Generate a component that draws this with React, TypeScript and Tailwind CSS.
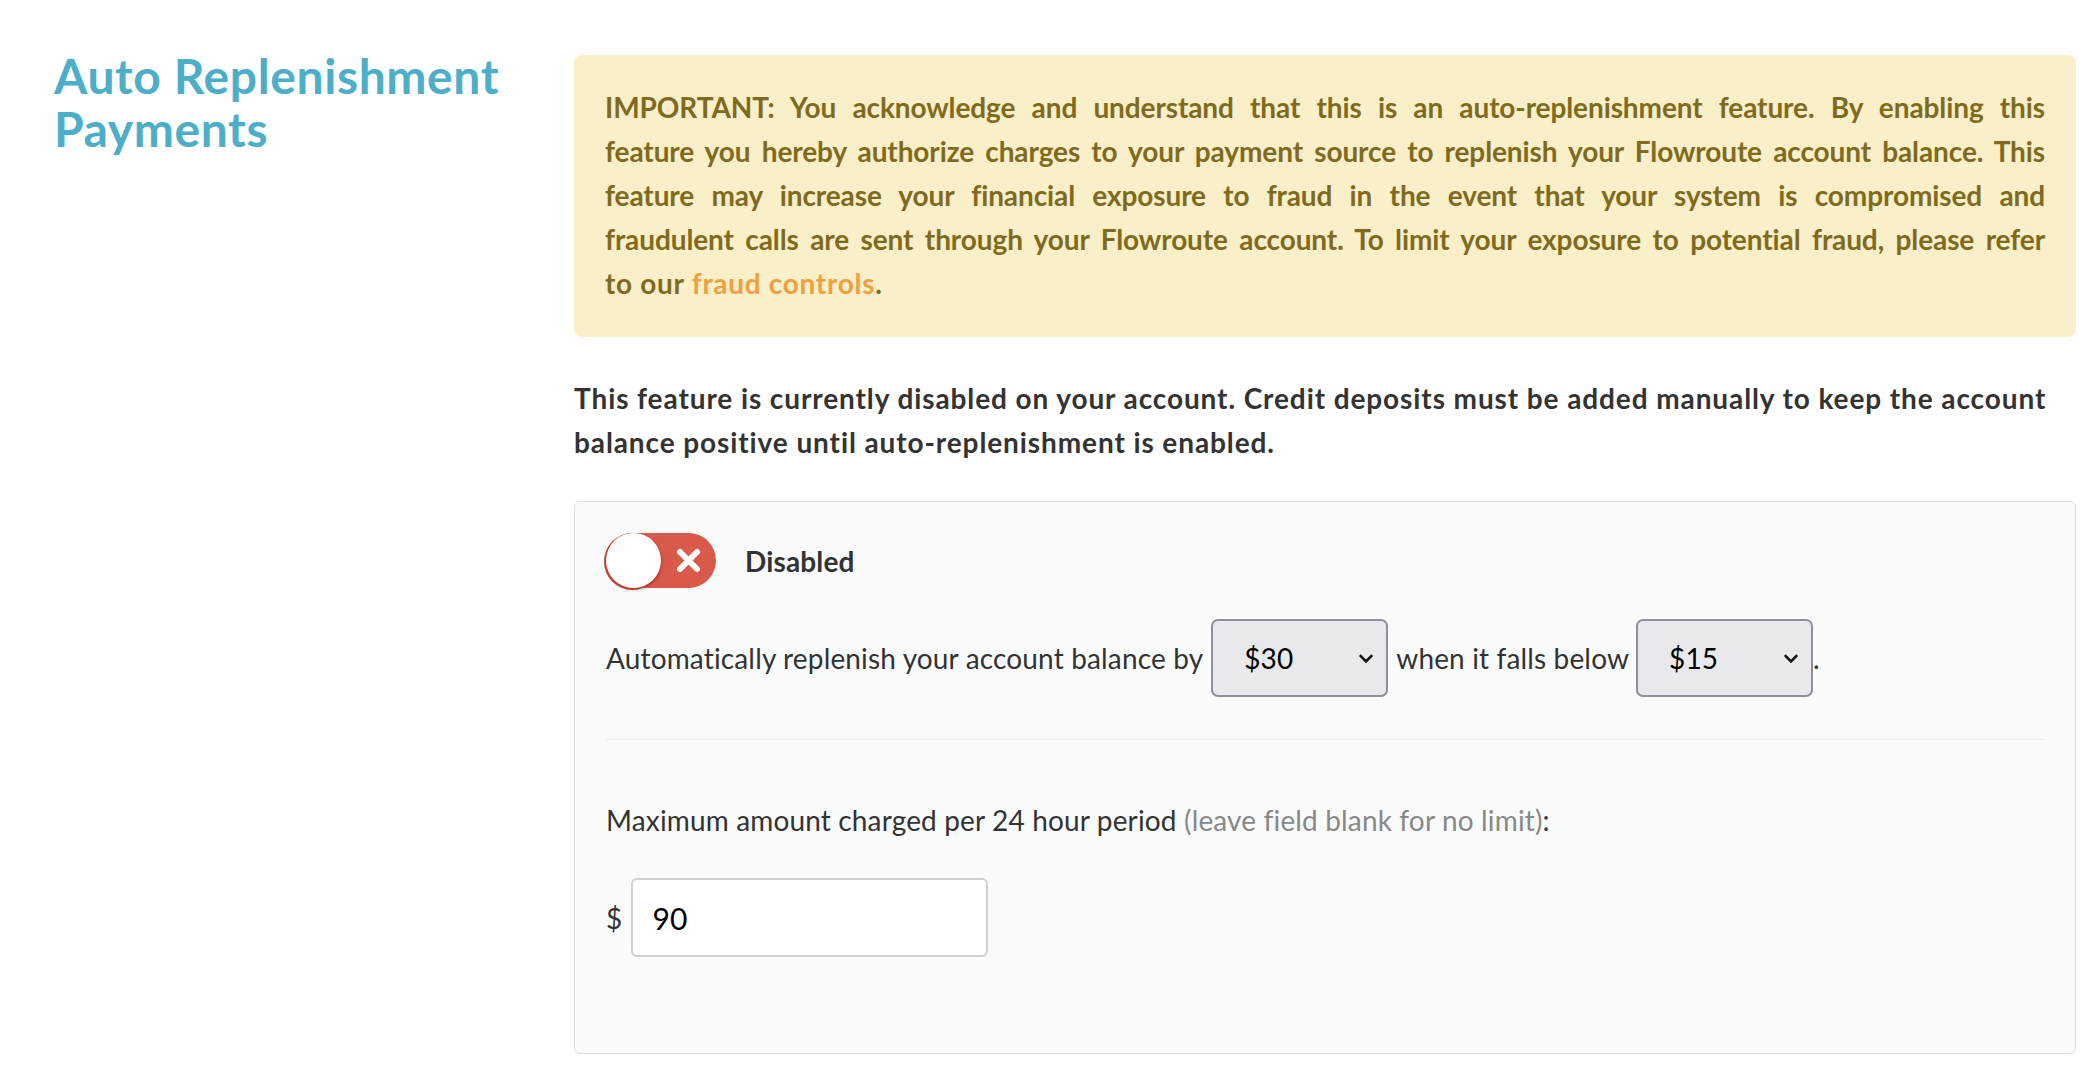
import { useState } from "react";

const TITLE = "#4daec9";
const OLIVE = "#7f6b1e";
const INK = "#333333";

const WARNING_LINES = [
  "IMPORTANT: You acknowledge and understand that this is an auto-replenishment feature. By enabling this",
  "feature you hereby authorize charges to your payment source to replenish your Flowroute account balance. This",
  "feature may increase your financial exposure to fraud in the event that your system is compromised and",
  "fraudulent calls are sent through your Flowroute account. To limit your exposure to potential fraud, please refer",
];

function Toggle({ on, onChange }: { on: boolean; onChange: () => void }) {
  return (
    <button
      onClick={onChange}
      className="relative w-[110px] h-[55px] rounded-full bg-[#d9594a] shrink-0 cursor-pointer"
    >
      <span className="absolute left-0 top-0 w-[55px] h-[55px] rounded-full bg-white shadow-[-1px_1px_0_1px_#b8412f,1px_2px_3px_rgba(120,20,10,0.35)]" />
      <svg className="absolute left-[69px] top-[14px]" width="27" height="27" viewBox="0 0 27 27">
        <path d="M5 5 L22 22 M22 5 L5 22" stroke="#fff" strokeWidth="6" strokeLinecap="round" />
      </svg>
    </button>
  );
}

function Select({ value }: { value: string }) {
  return (
    <div className="w-[177px] h-[78px] rounded-[7px] border-2 border-[#8f8f9d] bg-[#e9e9ed] pl-[31px] pr-[12px] flex items-center justify-between text-[28px] text-black shrink-0">
      <span>{value}</span>
      <svg width="16" height="11" viewBox="0 0 16 11">
        <path d="M1.8 2.2 L8 8.4 L14.2 2.2" stroke="#111" strokeWidth="2.6" fill="none" />
      </svg>
    </div>
  );
}

export default function App() {
  const [enabled, setEnabled] = useState(false);
  const [max, setMax] = useState("90");

  return (
    <div className="min-h-screen bg-white flex pl-[54px] pr-[24px] pt-[55px]" style={{ fontFamily: "Lato, 'Noto Sans', sans-serif" }}>
      <div className="w-[520px] shrink-0">
        <h1 className="-mt-[6px] text-[48px] leading-[53px] font-bold tracking-[0.6px]" style={{ color: TITLE }}>
          Auto Replenishment Payments
        </h1>
      </div>

      <div className="flex-1">
        {/* Warning */}
        <div className="rounded-[8px] bg-[#f9efc8] px-[31px] pt-[30px] pb-[32px] text-[28px] leading-[44px] font-bold tracking-[-0.1px]" style={{ color: OLIVE }}>
          {WARNING_LINES.map((line, i) => (
            <div key={i} className="whitespace-nowrap text-justify [text-align-last:justify]">{line}</div>
          ))}
          <div className="tracking-[0.7px]">
            to our <a className="text-[#f0a03f]">fraud controls</a>.
          </div>
        </div>

        <p className="mt-[39px] text-[28px] leading-[44px] font-bold tracking-[0.9px]" style={{ color: INK }}>
          This feature is currently disabled on your account. Credit deposits must be added manually to keep the
          account balance positive until auto-replenishment is enabled.
        </p>

        {/* Settings panel */}
        <div className="mt-[37px] rounded-[6px] border border-[#dddddd] bg-[#fafbfb] px-[31px] pt-[31px] pb-[96px] text-[28px] tracking-[0.15px]" style={{ color: INK }}>
          <div className="flex items-center gap-[29px]">
            <Toggle on={enabled} onChange={() => setEnabled(!enabled)} />
            <span className="font-bold">{enabled ? "Enabled" : "Disabled"}</span>
          </div>

          <div className="mt-[31px] flex items-center">
            <span>Automatically replenish your account balance by</span>
            <div className="ml-[8px]"><Select value="$30" /></div>
            <span className="ml-[8px]">when it falls below</span>
            <div className="ml-[7px]"><Select value="$15" /></div>
            <span>.</span>
          </div>

          <div className="mt-[42px] h-px bg-[#ebebeb]" />

          <p className="mt-[58px] leading-[44px]">
            Maximum amount charged per 24 hour period <span className="text-[#888888]">(leave field blank for no limit)</span>:
          </p>

          <div className="mt-[36px] flex items-center">
            <span>$</span>
            <input
              value={max}
              onChange={e => setMax(e.target.value)}
              className="ml-[9px] w-[357px] h-[79px] rounded-[6px] border-2 border-[#d0d0d0] bg-white px-[19px] text-[30px] text-black outline-none"
            />
          </div>
        </div>
      </div>
    </div>
  );
}
